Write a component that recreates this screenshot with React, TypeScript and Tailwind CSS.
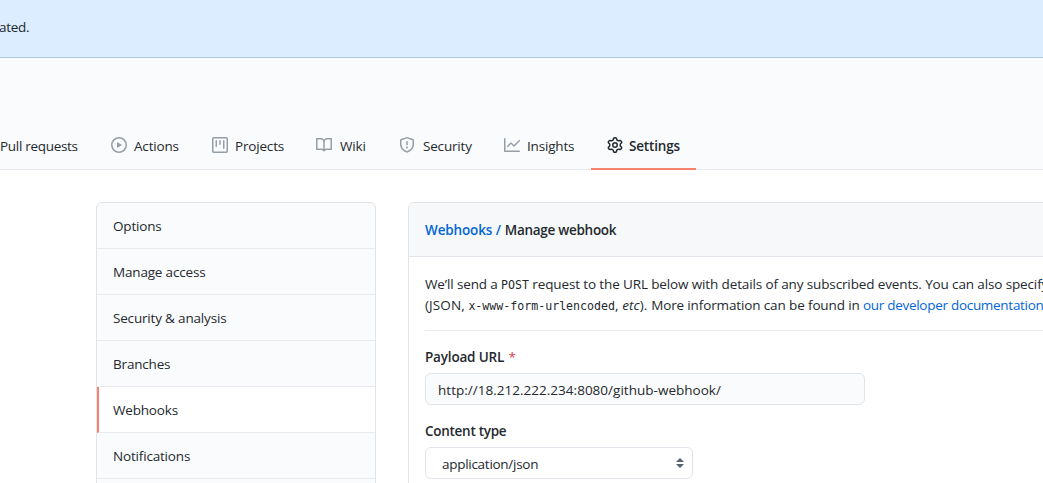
import React from "react";

const icons = {
  play: "M1.5 8a6.5 6.5 0 1113 0 6.5 6.5 0 01-13 0zM8 0a8 8 0 100 16A8 8 0 008 0zM6.379 5.227A.25.25 0 006 5.442v5.117a.25.25 0 00.379.214l4.264-2.559a.25.25 0 000-.428L6.379 5.227z",
  project:
    "M1.75 0A1.75 1.75 0 000 1.75v12.5C0 15.216.784 16 1.75 16h12.5A1.75 1.75 0 0016 14.25V1.75A1.75 1.75 0 0014.25 0H1.75zM1.5 1.75a.25.25 0 01.25-.25h12.5a.25.25 0 01.25.25v12.5a.25.25 0 01-.25.25H1.75a.25.25 0 01-.25-.25V1.75zM11.75 3a.75.75 0 00-.75.75v7.5a.75.75 0 001.5 0v-7.5a.75.75 0 00-.75-.75zm-8.25.75a.75.75 0 011.5 0v5.5a.75.75 0 01-1.5 0v-5.5zM8 3a.75.75 0 00-.75.75v3.5a.75.75 0 001.5 0v-3.5A.75.75 0 008 3z",
  book: "M0 1.75A.75.75 0 01.75 1h4.253c1.227 0 2.317.59 3 1.501A3.744 3.744 0 0111.006 1h4.245a.75.75 0 01.75.75v10.5a.75.75 0 01-.75.75h-4.507a2.25 2.25 0 00-1.591.659l-.622.621a.75.75 0 01-1.06 0l-.622-.621A2.25 2.25 0 005.258 13H.75a.75.75 0 01-.75-.75V1.75zm8.755 3a2.25 2.25 0 012.25-2.25H14.5v9h-3.757c-.71 0-1.4.201-1.992.572l.004-7.322zm-1.504 7.324l.004-5.073-.002-2.253A2.25 2.25 0 005.003 2.5H1.5v9h3.757a3.75 3.75 0 011.994.574z",
  shield:
    "M7.467.133a1.75 1.75 0 011.066 0l5.25 1.68A1.75 1.75 0 0115 3.48V7c0 1.566-.32 3.182-1.303 4.682-.983 1.498-2.585 2.813-5.032 3.855a1.7 1.7 0 01-1.33 0c-2.447-1.042-4.049-2.357-5.032-3.855C1.32 10.182 1 8.566 1 7V3.48a1.75 1.75 0 011.217-1.667l5.25-1.68zm.61 1.429a.25.25 0 00-.153 0l-5.25 1.68a.25.25 0 00-.174.238V7c0 1.358.275 2.666 1.057 3.86.784 1.194 2.121 2.34 4.366 3.297a.2.2 0 00.154 0c2.245-.956 3.582-2.104 4.366-3.298C13.225 9.666 13.5 8.36 13.5 7V3.48a.25.25 0 00-.174-.237l-5.25-1.68zM9 10.5a1 1 0 11-2 0 1 1 0 012 0zm-.25-5.75a.75.75 0 10-1.5 0v3a.75.75 0 001.5 0v-3z",
  graph:
    "M1.5 1.75a.75.75 0 00-1.5 0v12.5c0 .414.336.75.75.75h14.5a.75.75 0 000-1.5H1.5V1.75zm14.28 2.53a.75.75 0 00-1.06-1.06L10 7.94 7.53 5.47a.75.75 0 00-1.06 0L3.22 8.72a.75.75 0 001.06 1.06L7 7.06l2.47 2.47a.75.75 0 001.06 0l5.25-5.25z",
  gear: "M7.429 1.525a6.593 6.593 0 011.142 0c.036.003.108.036.137.146l.289 1.105c.147.56.55.967.997 1.189.174.086.341.183.501.29.417.278.97.423 1.53.27l1.102-.303c.11-.03.175.016.195.046.219.31.41.641.573.989.014.031.022.11-.059.19l-.815.806c-.411.406-.562.957-.53 1.456a4.588 4.588 0 010 .582c-.032.499.119 1.05.53 1.456l.815.806c.08.08.073.159.059.19a6.494 6.494 0 01-.573.99c-.02.029-.086.074-.195.045l-1.103-.303c-.559-.153-1.112-.008-1.529.27-.16.107-.327.204-.5.29-.449.222-.851.628-.998 1.189l-.289 1.105c-.029.11-.101.143-.137.146a6.613 6.613 0 01-1.142 0c-.036-.003-.108-.037-.137-.146l-.289-1.105c-.147-.56-.55-.967-.997-1.189a4.502 4.502 0 01-.501-.29c-.417-.278-.97-.423-1.53-.27l-1.102.303c-.11.03-.175-.016-.195-.046a6.492 6.492 0 01-.573-.989c-.014-.031-.022-.11.059-.19l.815-.806c.411-.406.562-.957.53-1.456a4.587 4.587 0 010-.582c.032-.499-.119-1.05-.53-1.456l-.815-.806c-.08-.08-.073-.159-.059-.19a6.44 6.44 0 01.573-.99c.02-.029.086-.075.195-.045l1.103.303c.559.153 1.112.008 1.529-.27.16-.107.327-.204.5-.29.449-.222.851-.628.998-1.189l.289-1.105c.029-.11.101-.143.137-.146zM8 0c-.236 0-.47.01-.701.03-.743.065-1.29.615-1.458 1.261l-.29 1.106c-.017.066-.078.158-.211.224a5.994 5.994 0 00-.668.386c-.123.082-.233.09-.3.071L3.27 2.776c-.644-.177-1.392.02-1.82.63a7.977 7.977 0 00-.704 1.217c-.315.675-.111 1.422.363 1.891l.815.806c.05.048.098.147.088.294a6.084 6.084 0 000 .772c.01.147-.038.246-.088.294l-.815.806c-.474.469-.678 1.216-.363 1.891.2.428.436.835.704 1.218.428.609 1.176.806 1.82.63l1.103-.303c.066-.019.176-.011.299.071.213.143.436.272.668.386.133.066.194.158.212.224l.289 1.106c.169.646.715 1.196 1.458 1.26a8.094 8.094 0 001.402 0c.743-.064 1.29-.614 1.458-1.26l.29-1.106c.017-.066.078-.158.211-.224a5.98 5.98 0 00.668-.386c.123-.082.233-.09.3-.071l1.102.302c.644.177 1.392-.02 1.82-.63.268-.382.505-.789.704-1.217.315-.675.111-1.422-.364-1.891l-.814-.806c-.05-.048-.098-.147-.088-.294a6.1 6.1 0 000-.772c-.01-.147.039-.246.088-.294l.814-.806c.475-.469.679-1.216.364-1.891a7.992 7.992 0 00-.704-1.218c-.428-.609-1.176-.806-1.82-.63l-1.103.303c-.066.019-.176.011-.299-.071a5.991 5.991 0 00-.668-.386c-.133-.066-.194-.158-.212-.224L10.16 1.29C9.99.645 9.444.095 8.701.031A8.094 8.094 0 008 0zm1.5 8a1.5 1.5 0 11-3 0 1.5 1.5 0 013 0zM11 8a3 3 0 11-6 0 3 3 0 016 0z",
};

const tabs = [
  { label: "Actions", icon: icons.play, width: "w-[101px]", gap: "gap-[7px]" },
  { label: "Projects", icon: icons.project, width: "w-[104px]", gap: "gap-[7px]" },
  { label: "Wiki", icon: icons.book, width: "w-[83px]", gap: "gap-[8px]" },
  { label: "Security", icon: icons.shield, width: "w-[105px]", gap: "gap-[8px]" },
  { label: "Insights", icon: icons.graph, width: "w-[103px]", gap: "gap-[7px]" },
  { label: "Settings", icon: icons.gear, width: "w-[105px]", gap: "gap-[6px]", active: true },
];

const menu = [
  "Options",
  "Manage access",
  "Security & analysis",
  "Branches",
  "Webhooks",
  "Notifications",
];

function Code({ children }: { children: React.ReactNode }) {
  return (
    <code className="font-['DejaVu_Sans_Mono',monospace] text-[11.6px] leading-none tracking-normal">
      {children}
    </code>
  );
}

export default function App() {
  return (
    <div className="flex h-[483px] w-[1043px] flex-col overflow-hidden bg-white font-['Open_Sans',sans-serif] text-[13.5px] leading-[21px] tracking-[-0.18px] whitespace-nowrap text-[#24292e]">
      <div className="h-[58px] shrink-0 border-b border-[#a9c6e3] bg-[#dbedff] pt-[17px]">
        <span className="-ml-px tracking-[-0.3px]">ated.</span>
      </div>
      <header className="flex h-[112px] shrink-0 items-end border-b border-[#e7e9ec] bg-[#fafbfc]">
        <div className="flex h-[48px] w-[95px] shrink-0 items-center pt-[2px] tracking-[-0.3px]">
          Pull requests
        </div>
        {tabs.map((t) => (
          <div
            key={t.label}
            className={`flex h-[48px] shrink-0 items-center pl-4 ${t.width} ${t.gap} ${
              t.active
                ? "-mb-px border-b-2 border-[#f9826c] font-semibold"
                : "border-b-2 border-transparent"
            }`}
          >
            <svg
              viewBox="0 0 16 16"
              className={`size-4 shrink-0 ${t.active ? "fill-[#24292e]" : "mt-[2px] fill-[#959da5]"}`}
            >
              <path fillRule="evenodd" d={t.icon} />
            </svg>
            <span className={t.active ? "pt-[3px]" : "pt-[5px]"}>{t.label}</span>
          </div>
        ))}
      </header>
      <main className="flex items-start gap-8 pt-8 pl-24">
        <nav className="h-[320px] w-[280px] shrink-0 overflow-hidden rounded-md border border-[#e1e4e8] bg-[#fafbfc]">
          {menu.map((m) => (
            <div
              key={m}
              className={`flex h-[46px] items-center border-b border-[#e7e9ec] pt-[2px] ${
                m === "Webhooks" ? "border-l-2 border-l-[#f9826c] bg-white pl-[14px]" : "pl-4"
              }`}
            >
              {m}
            </div>
          ))}
        </nav>
        <section className="h-[400px] w-[760px] shrink-0 overflow-hidden rounded-md border border-[#e1e4e8]">
          <h2 className="flex h-[54px] items-center gap-1 border-b border-[#e1e4e8] bg-[#f6f8fa] pt-[2px] pl-4 font-semibold tracking-[-0.28px]">
            <span className="tracking-[-0.13px] text-[#0366d6]">Webhooks /</span>
            <span>Manage webhook</span>
          </h2>
          <div className="px-4 pt-[17px]">
            <div className="h-[57px] border-b border-[#e7e9ec]">
              <p className="h-[21px] tracking-[-0.13px]">
                We’ll send a <Code>POST</Code> request to the URL below with details of any
                subscribed events. You can also specify
              </p>
              <p className="h-[21px]">
                <span className="tracking-[0.1px]">
                  (JSON, <Code>x-www-form-urlencoded</Code>, <em>etc</em>).{" "}
                </span>
                <span className="tracking-[-0.13px]">More information can be found in </span>
                <span className="tracking-[-0.29px] text-[#0366d6]">
                  our developer documentation
                </span>
              </p>
            </div>
            <div className="mt-4 font-semibold">
              Payload URL <span className="ml-px font-normal text-[#d73a49]">*</span>
            </div>
            <div className="mt-[5px] flex h-8 w-[440px] items-center rounded-md border border-[#e1e4e8] bg-[#fafbfc] pt-[2px] pl-3 tracking-[0.02px]">
              http://18.212.222.234:8080/github-webhook/
            </div>
            <div className="mt-4 font-semibold tracking-[-0.28px]">Content type</div>
            <div className="mt-[5px] flex h-8 w-[268px] items-center justify-between rounded-md border border-[#e1e4e8] pr-2 pl-4">
              <span className="pt-[2px] tracking-[-0.28px]">application/json</span>
              <svg viewBox="0 0 8 10" className="h-[10px] w-2 fill-[#586069]">
                <path d="M4 0 8 4H0ZM0 6h8L4 10Z" />
              </svg>
            </div>
          </div>
        </section>
      </main>
    </div>
  );
}
